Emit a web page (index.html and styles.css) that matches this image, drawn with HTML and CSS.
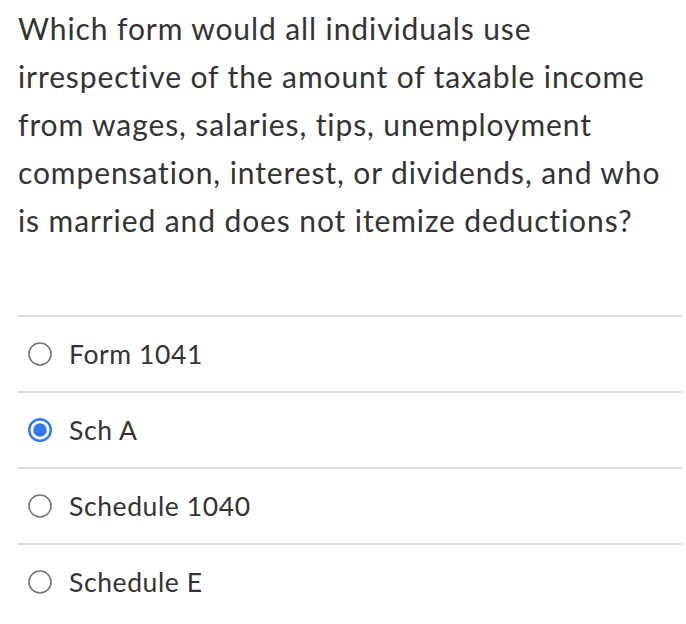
FILE: index.html
```html
<!DOCTYPE html>
<html>
<head>
<meta charset="utf-8">
<link rel="stylesheet" href="styles.css">
</head>
<body>
<div class="question">
  <p class="prompt">Which form would all individuals use irrespective of the amount of taxable income from wages, salaries, tips, unemployment compensation, interest, or dividends, and who is married and does not itemize deductions?</p>
  <ul class="answers">
    <li class="answer">
      <svg class="radio" viewBox="0 0 24 24" width="24" height="24"><circle cx="12" cy="12" r="11" fill="#fff" stroke="#767676" stroke-width="1.6"/></svg>
      <span class="label">Form 1041</span>
    </li>
    <li class="answer">
      <svg class="radio" viewBox="0 0 24 24" width="24" height="24"><circle cx="12" cy="12" r="10.8" fill="#fff" stroke="#3478f6" stroke-width="2.4"/><circle cx="12" cy="12" r="6.8" fill="#3478f6"/></svg>
      <span class="label">Sch A</span>
    </li>
    <li class="answer">
      <svg class="radio" viewBox="0 0 24 24" width="24" height="24"><circle cx="12" cy="12" r="11" fill="#fff" stroke="#767676" stroke-width="1.6"/></svg>
      <span class="label">Schedule 1040</span>
    </li>
    <li class="answer">
      <svg class="radio" viewBox="0 0 24 24" width="24" height="24"><circle cx="12" cy="12" r="11" fill="#fff" stroke="#767676" stroke-width="1.6"/></svg>
      <span class="label">Schedule E</span>
    </li>
  </ul>
</div>
</body>
</html>
```
FILE: styles.css
```css
html, body {
  margin: 0;
  padding: 0;
  background: #fff;
}
body {
  font-family: Lato, "Liberation Sans", sans-serif;
  color: #333;
}
.question {
  padding: 4px 4px 0 18px;
}
.prompt {
  margin: 0;
  font-size: 30px;
  letter-spacing: 0.9px;
  line-height: 48px;
  width: 655px;
}
.answers {
  list-style: none;
  margin: 71px 0 0 0;
  padding: 0;
  border-top: 2px solid #dcdcdc;
}
.answer {
  display: flex;
  align-items: center;
  height: 74px;
  border-bottom: 2px solid #dcdcdc;
  padding-left: 10px;
  gap: 17px;
}
.answer:last-child {
  border-bottom: none;
}
.radio {
  flex: none;
  display: block;
}
.label {
  font-size: 26.5px;
  letter-spacing: 0.6px;
}
```
